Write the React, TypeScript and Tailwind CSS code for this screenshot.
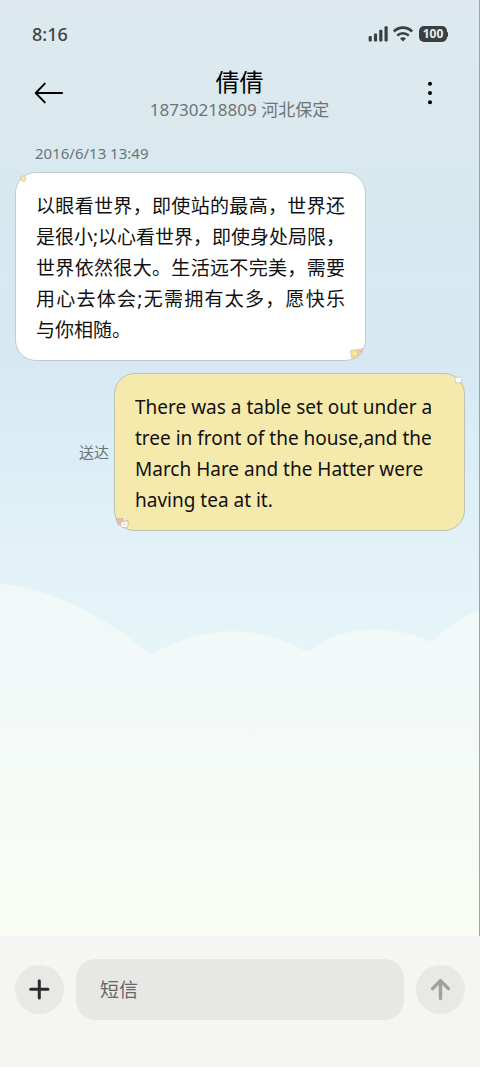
import React from "react";

type Message = {
  id: number;
  lines: string[];
};

const received: Message = {
  id: 1,
  lines: [
    "以眼看世界，即使站的最高，世界还",
    "是很小;以心看世界，即使身处局限，",
    "世界依然很大。生活远不完美，需要",
    "用心去体会;无需拥有太多，愿快乐",
    "与你相随。",
  ],
};

const sentText =
  "There was a table set out under a tree in front of the house,and the March Hare and the Hatter were having tea at it.";

const CloudBackground: React.FC = () => (
  <svg
    className="absolute inset-0 h-full w-full"
    viewBox="0 0 480 936"
    preserveAspectRatio="none"
    aria-hidden="true"
  >
    <defs>
      <linearGradient id="sky" gradientUnits="userSpaceOnUse" x1="0" y1="0" x2="0" y2="660">
        <stop offset="0" stopColor="#dde9ef" />
        <stop offset="0.2" stopColor="#dbe9ef" />
        <stop offset="0.3" stopColor="#d7e8ef" />
        <stop offset="0.55" stopColor="#d6e9f3" />
        <stop offset="0.85" stopColor="#e2f2f7" />
        <stop offset="1" stopColor="#e5f5f8" />
      </linearGradient>
      <linearGradient id="cloud" gradientUnits="userSpaceOnUse" x1="0" y1="584" x2="0" y2="936">
        <stop offset="0" stopColor="#f0f9f8" />
        <stop offset="0.3" stopColor="#f3f9f8" />
        <stop offset="1" stopColor="#f9fdf4" />
      </linearGradient>
    </defs>
    <rect width="480" height="936" fill="url(#sky)" />
    <path
      d="M0 584C50 587 108 618 151 655C205 624 258 624 308 652C345 623 394 625 433 642C448 627 462 616 480 610V936H0Z"
      fill="url(#cloud)"
    />
  </svg>
);

const SignalIcon: React.FC = () => (
  <svg width="20" height="16" viewBox="0 0 20 16" fill="#3b3f41" aria-hidden="true">
    <rect x="0.6" y="10" width="3.2" height="5.5" rx="1" />
    <rect x="5.9" y="7.5" width="3.2" height="8" rx="1" />
    <rect x="11.2" y="3.8" width="3.2" height="11.7" rx="1" />
    <rect x="16.5" y="0.3" width="3.2" height="15.2" rx="1" />
  </svg>
);

const WifiIcon: React.FC = () => (
  <svg width="20" height="16" viewBox="0 0 20 16" fill="none" stroke="#3b3f41" aria-hidden="true">
    <path d="M0.8 5.5C6 0.3 14 0.3 19.2 5.5" strokeWidth="2.6" />
    <path d="M4.2 9.6C7.5 6.4 12.5 6.4 15.8 9.6" strokeWidth="2.5" />
    <path d="M10 15.4L7 12.4C8.6 10.8 11.4 10.8 13 12.4Z" fill="#3b3f41" stroke="none" />
  </svg>
);

const StatusBar: React.FC = () => (
  <div className="flex h-[68px] items-center justify-between pr-[31px] pl-8 text-[#3f4446]">
    <span className="text-lg leading-6 font-medium">8:16</span>
    <div className="flex items-center gap-[5px]">
      <SignalIcon />
      <WifiIcon />
      <div className="flex items-center">
        <span className="ml-px flex h-4 w-7 items-center justify-center rounded-[5px] bg-[#3b3f41] text-xs leading-4 font-bold text-[#e8f0f3]">
          100
        </span>
        <span className="h-[5px] w-px rounded-r bg-[#3b3f41]" />
      </div>
    </div>
  </div>
);

const Header: React.FC = () => (
  <header className="flex items-start justify-between px-[34px]">
    <button type="button" aria-label="返回" className="flex h-[50px] w-[30px] items-center">
      <svg width="30" height="22" viewBox="0 0 30 22" fill="none" stroke="#000" strokeWidth="1.9">
        <path d="M28.2 11H2M10.8 1.6L1.7 11L10.8 20.4" strokeLinejoin="round" strokeLinecap="round" />
      </svg>
    </button>
    <div className="flex flex-col items-center">
      <h1 className="text-2xl leading-7 font-normal text-black">倩倩</h1>
      <p className="text-[17px] leading-7 text-[#6b7477]">18730218809 河北保定</p>
    </div>
    <button type="button" aria-label="更多" className="flex h-[50px] w-[30px] items-center justify-center">
      <svg width="4" height="24" viewBox="0 0 4 24" fill="#000">
        <circle cx="2" cy="2.7" r="2" />
        <circle cx="2" cy="12" r="2" />
        <circle cx="2" cy="21.3" r="2" />
      </svg>
    </button>
  </header>
);

const ReceivedBubble: React.FC<{ message: Message }> = ({ message }) => (
  <div className="relative w-[78%] rounded-[21px] border border-[#c3cace] bg-white px-5 pt-[18px] pb-[14px] text-[19px] leading-[31px] text-[#111]">
    {message.lines.map((line, i) => (
      <p
        key={line}
        className={
          i < message.lines.length - 1 ? "whitespace-nowrap [text-align-last:justify]" : "whitespace-nowrap"
        }
      >
        {line}
      </p>
    ))}
    <svg className="absolute top-0 left-0" width="12" height="12" viewBox="0 0 12 12" aria-hidden="true">
      <path d="M4 4.5L7 2.5L10 4.5L9 8L6 8.5Z" fill="#f3e8a4" stroke="#c9c6a6" strokeWidth="0.7" />
    </svg>
    <svg className="absolute right-0 bottom-0" width="16" height="12" viewBox="0 0 16 12" aria-hidden="true">
      <path d="M8 1.5L14.5 0.5L12.5 5.5L8.5 8.5Z" fill="#f6c9b8" stroke="#c9bcb8" strokeWidth="0.5" />
      <path d="M1.5 2.5L8.5 1.5L9.5 8L6 10L2.5 9.8Z" fill="#f5e08e" stroke="#bdb79d" strokeWidth="0.6" />
      <path d="M4 5.3Q5.5 6.8 7 4.5" fill="none" stroke="#fff6cc" strokeWidth="1.2" />
      <path d="M11 3.5L13 3" stroke="#eeaaa0" strokeWidth="1.2" />
    </svg>
  </div>
);

const SentBubble: React.FC<{ text: string }> = ({ text }) => (
  <div className="relative w-[78%] shrink-0 rounded-[21px] border border-[#bfc2b0] bg-[#f5eaac] pt-[18px] pr-3 pb-[14px] pl-5 text-[19px] leading-[31px] text-[#111]">
    <p>{text}</p>
    <svg className="absolute top-0 right-0" width="12" height="12" viewBox="0 0 12 12" aria-hidden="true">
      <path
        d="M2.6 4L5 3.2L7 4L9 2.5L10.5 4L9.5 6L9.3 9.3L6.5 8.4L4 9.3L3.2 6.5Z"
        fill="#fdfdfb"
        stroke="#b7bcc0"
        strokeWidth="0.7"
      />
    </svg>
    <svg className="absolute bottom-0 left-0" width="16" height="14" viewBox="0 0 16 14" aria-hidden="true">
      <path d="M1 3L7.5 2.5L8.5 8.5L3.5 9Z" fill="#f3c3b2" stroke="#b9a8a5" strokeWidth="0.8" />
      <path d="M6 6L13 4.5V10L11 12L7.5 11.5L5.5 9Z" fill="#fdf9f4" stroke="#b6b1ae" strokeWidth="0.8" />
      <path d="M3.5 5.5L6 4.7M8.5 8.5L10.5 8" stroke="#eaa596" strokeWidth="0.9" />
    </svg>
  </div>
);

const Composer: React.FC = () => (
  <form
    className="flex items-center gap-3 bg-[#f5f5f3] px-[15px] pt-[23px] pb-[47px]"
    onSubmit={(e) => e.preventDefault()}
  >
    <button
      type="button"
      aria-label="添加"
      className="flex h-[49px] w-[49px] shrink-0 items-center justify-center rounded-full bg-[#e8e8e6]"
    >
      <svg width="21" height="21" viewBox="0 0 21 21" stroke="#2b2b2b" strokeWidth="3" strokeLinecap="round">
        <path d="M10.3 1.7V18.9M1.7 10.3H18.9" />
      </svg>
    </button>
    <input
      type="text"
      aria-label="短信"
      placeholder="短信"
      className="h-[61px] min-w-0 flex-1 rounded-[20px] bg-[#e7e7e5] px-6 text-[19px] text-[#222] outline-none placeholder:text-[#666664]"
    />
    <button
      type="submit"
      aria-label="发送"
      className="flex h-[49px] w-[49px] shrink-0 items-center justify-center rounded-full bg-[#e8e8e6]"
    >
      <svg
        width="21"
        height="23"
        viewBox="0 0 21 23"
        fill="none"
        stroke="#a0a09e"
        strokeWidth="3.4"
        strokeLinecap="round"
        strokeLinejoin="round"
      >
        <path d="M10.5 20.5V2.8M2.6 10.6L10.5 2.6L18.4 10.6" />
      </svg>
    </button>
  </form>
);

export default function App() {
  return (
    <div className="flex min-h-screen flex-col bg-[#f5f5f3] font-['Noto_Sans','Noto_Sans_CJK_SC',sans-serif]">
      <main className="relative isolate flex-1 border-r border-[#9aa5a8]">
        <div className="absolute inset-0 -z-10">
          <CloudBackground />
        </div>
        <StatusBar />
        <Header />
        <section className="pr-[14px] pl-[15px]">
          <time dateTime="2016-06-13T13:49" className="mt-[18px] block pl-5 text-[15px] leading-[22px] text-[#6b7477]">
            2016/6/13 13:49
          </time>
          <div className="mt-2 flex flex-col gap-3">
            <ReceivedBubble message={received} />
            <div className="flex items-center justify-end gap-[5px]">
              <span className="text-[15px] leading-6 text-[#6b7477]">送达</span>
              <SentBubble text={sentText} />
            </div>
          </div>
        </section>
      </main>
      <Composer />
    </div>
  );
}
